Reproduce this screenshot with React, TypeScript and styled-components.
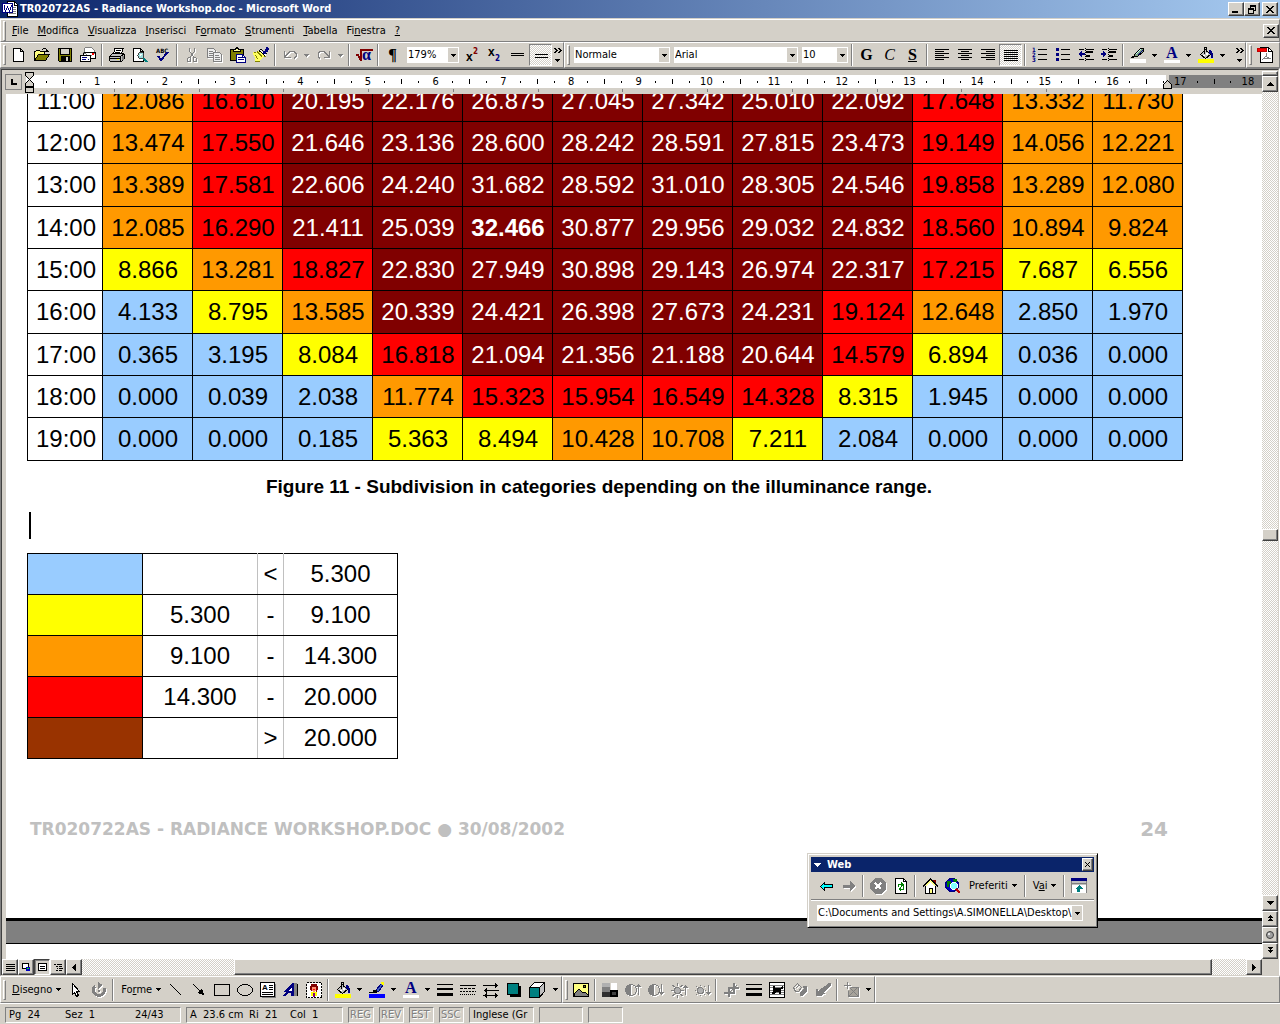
import React from 'react';
import styled, { createGlobalStyle, css } from 'styled-components';

const face = '#d4d0c8';
const shade = '#808080';
const dark = '#404040';
const navy = '#000080';
const ui = '"DejaVu Sans Condensed", "DejaVu Sans", Tahoma, sans-serif';
const doc = '"Liberation Sans", Arial, sans-serif';
const serif = '"Liberation Serif", "Times New Roman", serif';
const dither = 'repeating-conic-gradient(#fff 0 25%, #d4d0c8 0 50%) 0 0 / 2px 2px';

const Global = createGlobalStyle`
  *, *::before, *::after { box-sizing: border-box; }
  body { margin: 0; background: ${face}; font: 11px/14px ${ui}; color: #000; }
  button, input, select { font: inherit; color: inherit; margin: 0; padding: 0; border: 0; border-radius: 0; }
  table { border-collapse: collapse; }
  svg { display: block; flex: none; overflow: visible; }
`;

/* ---------- shared parts ---------- */

const Shell = styled.div`
  display: flex;
  flex-direction: column;
  height: 100vh;
  overflow: hidden;
  background: ${face};
`;

const raised = css`
  background: ${face};
  border: 1px solid;
  border-color: #fff ${dark} ${dark} #fff;
  box-shadow: inset -1px -1px 0 ${shade};
`;

const RaisedButton = styled.button<{ $w?: number; $h?: number; $on?: boolean }>`
  ${raised}
  display: flex;
  align-items: center;
  justify-content: center;
  flex: none;
  width: ${p => p.$w ?? 16}px;
  height: ${p => p.$h ?? 16}px;
  ${p => p.$on && css`border-color: ${dark} #fff #fff ${dark}; box-shadow: inset 1px 1px 0 ${shade};`}
`;

const Row = styled.div`
  display: flex;
  align-items: stretch;
  flex: none;
`;

const Bar = styled.div<{ $grow?: boolean; $h?: number }>`
  display: flex;
  align-items: center;
  flex: ${p => (p.$grow ? '1 0 auto' : 'none')};
  min-height: ${p => p.$h ?? 26}px;
  border: 1px solid;
  border-color: #fff ${shade} ${shade} #fff;
`;

const Grip = styled.span`
  flex: none;
  width: 3px;
  height: 20px;
  margin: 0 1px 0 2px;
  border: 1px solid;
  border-color: #fff ${shade} ${shade} #fff;
`;

const Sep = styled.span`
  flex: none;
  width: 2px;
  height: 22px;
  margin: 0 2px;
  border-left: 1px solid ${shade};
  border-right: 1px solid #fff;
`;

const ToolButton = styled.button<{ $on?: boolean; $off?: boolean }>`
  display: flex;
  align-items: center;
  justify-content: center;
  flex: none;
  width: 23px;
  height: 22px;
  background: transparent;
  border: 1px solid transparent;
  ${p => p.$on && css`background: ${dither}; border-color: ${shade} #fff #fff ${shade};`}
  ${p => p.$off && css`color: ${shade}; svg { filter: drop-shadow(1px 1px 0 #fff); }`}
`;

const CaretButton = styled(ToolButton)`
  width: 11px;
`;

const TextButton = styled.button`
  display: flex;
  align-items: center;
  gap: 4px;
  flex: none;
  height: 22px;
  padding: 0 3px 0 5px;
  background: transparent;
  white-space: nowrap;
`;

const Letter = styled.span<{ $italic?: boolean; $line?: boolean }>`
  font: ${p => (p.$italic ? 'italic 400' : 'normal 700')} 16px/18px ${serif};
  text-decoration: ${p => (p.$line ? 'underline' : 'none')};
`;

const Caret = () => (
  <svg width="5" height="3" viewBox="0 0 5 3" shapeRendering="crispEdges">
    <path d="M0 0h5v1h-1v1h-1v1h-1v-1h-1v-1h-1z" fill="currentColor" />
  </svg>
);

const U = styled.u`
  text-underline-offset: 1px;
`;

/* ---------- icons ---------- */

const Line = ({ d, c = '#000', f = 'none' }: { d: string; c?: string; f?: string }) => (
  <path d={d} stroke={c} fill={f} />
);
const Fill = ({ d, c = '#000' }: { d: string; c?: string }) => <path d={d} fill={c} />;
const T = ({ x, y, s, c = '#000', bold, f = ui, children }: { x: number; y: number; s: number; c?: string; bold?: boolean; f?: string; children: React.ReactNode }) => (
  <text x={x} y={y} fontSize={s} fill={c} fontWeight={bold ? 700 : 400} fontFamily={f}>{children}</text>
);

const bucket = (
  <>
    <Line d="M2.5 7.5l5-5 5 5-5 4z" f="#c0c0c0" />
    <Line d="M6.5 6.5v-6h2v4" />
    <Fill d="M8 6h2v2h-2zM5 8h2v1h-2z" c="#fff" />
    <Fill d="M11 3h2v1h1v2h1v5h-2v-4h-2z" c={navy} />
  </>
);
const disk = (dir: 'up' | 'down') => (
  <>
    <circle cx="6" cy="8" r="5.5" fill="none" stroke={shade} />
    <path d="M6 2.500a5.500 5.500 0 0 0 0 11z" fill={shade} />
    <Line d="M13.500 2v11" c={shade} />
    <Line d={dir === 'up' ? 'M11 4.500h5M12 3.500h3' : 'M11 10.500h5M12 11.500h3'} c={shade} />
  </>
);
const sun = (dir: 'up' | 'down') => (
  <>
    <circle cx="6.500" cy="8.500" r="3" fill="#b0b0b0" stroke={shade} />
    <Line d={dir === 'up' ? 'M6.500 1v3M6.500 13v3M0 8.500h3M10 8.500h3M1.500 3l2 2M11.500 3l-2 2M1.500 14l2-2M11.500 14l-2-2' : 'M6.500 3v1M6.500 13v1M1 8.500h1M11 8.500h1M2 4.500h1M10 4.500h1M2 12.500h1M10 12.500h1'} c={shade} />
    <Line d="M14.500 3v10" c={shade} />
    <Line d={dir === 'up' ? 'M12 5.500h5M13 4.500h3' : 'M12 10.500h5M13 11.500h3'} c={shade} />
  </>
);
const thick = <Fill d="M0 2h16v1h-16zM0 6h16v2h-16zM0 11h16v3h-16z" />;

const icons: Record<string, React.ReactNode> = {
  word: (
    <>
      <Line d="M5.5 .5h7l3 3v12h-10z" f="#fff" />
      <Line d="M12.500 1v3h3" />
      <Line d="M11 6.500h3M11 8.500h3M7 12.500h7M11 10.500h3" c={shade} />
      <Line d="M.5 2.500h10v9h-10z" c={navy} f="#fff" />
      <Line d="M2 4v2l1.500 4 2-4 2 4 1.500-4v-2" c={navy} />
    </>
  ),
  new: <Line d="M2.500 1.500h7l3 3v10h-10zM9.500 1.500v3h3" f="#fff" />,
  open: (
    <>
      <Line d="M.5 13.500v-9h1l1-1h3l1 1h4v3" f="#ffff80" />
      <Line d="M.5 13.500l4-6h11l-4 6z" f="#808000" />
      <Line d="M8 2.500h1M9 1.500h3M12.500 2v3M11 4.500h4M13.500 3v1" />
    </>
  ),
  save: (
    <>
      <Line d="M1.500 1.500h13v13h-12l-1-1z" f="#808000" />
      <Line d="M3.500 1.500h9v6h-9z" f={face} />
      <Fill d="M4 9h9v6h-9z" />
      <Fill d="M9 10h2v4h-2z" c={face} />
    </>
  ),
  mail: (
    <>
      <Line d="M4.500 5.500v-4l1-1h6l3 3v5" c={shade} f="#fff" />
      <Line d="M3.500 5.500h12v6h-12z" f="#fff" />
      <Line d="M3.500 5.500l6 4 6-4" c={shade} />
      <Fill d="M12 6h2v2h-2z" c="#f00" />
      <Line d="M.5 8.500h10v6h-10z" f="#fff" />
      <Line d="M2 10.500h5M2 12.500h4M8 12.500h1" c={navy} />
    </>
  ),
  print: (
    <>
      <Line d="M4.500 6.500l1.500-5h8l-1.500 5z" f="#fff" />
      <Line d="M7 3.500h5M6 5.500h5" />
      <Line d="M.5 9.500l3-3h11l1 1v4l-3 3h-11l-1-1z" f="#c0c0c0" />
      <Line d="M.5 9.500h11l4-3M11.500 9.500v5M1 11.500h10" />
      <Fill d="M8 12h2v1h-2z" c="#ff0" />
      <Fill d="M13 9h2v4h-2z" c={shade} />
    </>
  ),
  preview: (
    <>
      <Line d="M1.500 1.500h7l3 3v10h-10zM8.500 1.500v3h3" f="#fff" />
      <circle cx="9" cy="8.500" r="3" fill="#9fe0e0" stroke="#404040" />
      <Fill d="M8 7h2v1h-1v1h-1z" c="#fff" />
      <path d="M11.500 11l3.500 4" stroke="#008080" strokeWidth="2" />
    </>
  ),
  spell: (
    <>
      <T x={1} y={6} s={6} bold>ABC</T>
      <path d="M3 9l3 4 7-8" stroke={navy} strokeWidth="2" fill="none" />
    </>
  ),
  cut: (
    <>
      <Line d="M5.500 1v3l4 6M10.500 1v3l-4 6" c={shade} />
      <Line d="M4.500 10.500h2v4h-3v-3zM9.500 10.500h2l1 1v3h-3z" c={shade} />
    </>
  ),
  copy: (
    <>
      <Line d="M.5 1.500h6l2 2v7h-8z" c={shade} f="#eee" />
      <Line d="M2 4.500h4M2 6.500h5M2 8.500h5" c={shade} />
      <Line d="M6.500 5.500h6l2 2v7h-8z" c={shade} f="#eee" />
      <Line d="M8 8.500h4M8 10.500h5M8 12.500h5" c={shade} />
    </>
  ),
  paste: (
    <>
      <Line d="M.5 2.500h13v11h-13z" f="#808000" />
      <Line d="M3.500 3.500v-1h2l1-2h1l1 2h2v2h-7z" f="#ffffa0" />
      <Line d="M6.500 7.500h6l3 3v5h-9z" c={navy} f="#fff" />
      <Line d="M8 10.500h4M8 12.500h6M12.500 8v2h3" c={navy} />
    </>
  ),
  brush: (
    <>
      <Fill d="M0 5h4l1-1h3l3 4v2l-2 1-3 3h-4l-1-1h1v-3h-1v-2h-1z" c="#ffff60" />
      <Line d="M1 5.500h2M4 4.500l5 5M2.500 8l2 4" c="#808000" />
      <Line d="M6 3.500l7 6M7.500 2l6 5" />
      <Line d="M7 3l6 5.500" c="#fff" />
      <Fill d="M13 0h2v1h1v2h-1v2h-2v2h-3v-3h2v-2h1z" c={navy} />
      <Line d="M2 14.500h5M11 9.500h2" c="#808000" />
    </>
  ),
  undo: <Line d="M2.500 4v6h6M3 9.500l3-3M6 6.500l2-2h4l2 2v3l-2 2" c={shade} />,
  redo: <Line d="M13.500 4v6h-6M13 9.500l-3-3M10 6.500l-2-2h-4l-2 2v3l2 2" c={shade} />,
  root: (
    <>
      <path d="M0 8h2l3 6v-11h12" stroke="#800000" strokeWidth="1.500" fill="none" />
      <T x={6} y={13} s={16} c={navy} f={serif} bold>α</T>
    </>
  ),
  sup: (<><T x={2} y={14} s={12} bold f={doc}>x</T><T x={9} y={7} s={8} c="#800000" bold>2</T></>),
  sub: (<><T x={1} y={9} s={12} bold f={doc}>x</T><T x={8} y={14} s={8} c={navy} bold>2</T></>),
  equal: <Fill d="M1 6h13v1h-13zM1 8h13v1h-13z" />,
  equalWide: <Fill d="M2 7h13v1h-13zM2 10h13v1h-13z" />,
  left: <Fill d="M1 2h14v1h-14zM1 4h9v1h-9zM1 6h14v1h-14zM1 8h9v1h-9zM1 10h14v1h-14zM1 12h9v1h-9z" />,
  center: <Fill d="M1 2h14v1h-14zM4 4h8v1h-8zM1 6h14v1h-14zM4 8h8v1h-8zM1 10h14v1h-14zM4 12h8v1h-8z" />,
  right: <Fill d="M1 2h14v1h-14zM6 4h9v1h-9zM1 6h14v1h-14zM6 8h9v1h-9zM1 10h14v1h-14zM6 12h9v1h-9z" />,
  justify: <Fill d="M1 3h14v1h-14zM1 5h14v1h-14zM1 7h14v1h-14zM1 9h14v1h-14zM1 11h14v1h-14zM1 13h14v1h-14z" />,
  numbers: (
    <>
      <T x={0} y={5} s={6} c={navy} bold>1</T><T x={0} y={10} s={6} c={navy} bold>2</T><T x={0} y={15} s={6} c={navy} bold>3</T>
      <Fill d="M6 2h9v1h-9zM6 7h9v1h-9zM6 12h9v1h-9z" />
    </>
  ),
  bullets: (<><Fill d="M1 1h3v3h-3zM1 6h3v3h-3zM1 11h3v3h-3z" c={navy} /><Fill d="M6 2h9v1h-9zM6 7h9v1h-9zM6 12h9v1h-9z" /></>),
  outdent: (
    <>
      <Fill d="M1 2h5v1h-5zM8 2h8v1h-8zM8 4h7v2h-7zM8 8h4v2h-4zM1 12h5v1h-5zM8 12h8v1h-8z" />
      <path d="M7.500 1v14" stroke="#000" strokeDasharray="1 1" />
      <Fill d="M0 7h1v-1h1v-1h1v-1h1v2h3v2h-3v2h-1v-1h-1v-1h-1v-1h-1z" c={navy} />
    </>
  ),
  indent: (
    <>
      <Fill d="M1 2h5v1h-5zM8 2h8v1h-8zM8 4h7v2h-7zM8 8h4v2h-4zM1 12h5v1h-5zM8 12h8v1h-8z" />
      <path d="M7.500 1v14" stroke="#000" strokeDasharray="1 1" />
      <Fill d="M6 7h-1v-1h-1v-1h-1v-1h-1v2h-2v2h2v2h1v-1h1v-1h1v-1h1z" c={navy} />
    </>
  ),
  highlight: (
    <>
      <Fill d="M0 12h16v4h-16z" c="#fff" />
      <Line d="M4.500 7.500l6-6h3v3l-6 5h-3z" f="#80a080" />
      <Line d="M6 7l5-5" c="#c0ffff" />
      <Line d="M8 8l5-5" c={navy} />
      <Fill d="M2 9h3v1h-3zM1 10h3v1h-3z" />
    </>
  ),
  fontWhite: (<><Fill d="M0 13h16v3h-16z" c="#fff" /><T x={2} y={11} s={16} c={navy} bold f={serif}>A</T></>),
  bucketYellow: (<><Fill d="M0 12h16v4h-16z" c="#ff0" />{bucket}</>),
  penBlue: (
    <>
      <Fill d="M0 12h16v4h-16z" c="#00f" />
      <Line d="M6.500 8.500l6-7 2 1-5 7z" c={navy} f="#4060c0" />
      <Fill d="M12 0h3v3h-2z" c="#ff0" />
      <Line d="M0 10.500h4l3-2" />
      <Fill d="M4 8h4v3h-4z" />
    </>
  ),
  pdf: (
    <>
      <Line d="M3.500 .5h8l4 4v11h-12z" f="#fff" />
      <Line d="M11.500 .5v4h4" />
      <Line d="M5 13l4-4v-3l1 4 4 2M6 12l7-1" c={shade} />
      <Line d="M.5 1.500h9v3h-9z" c="#c00000" f="#f00" />
    </>
  ),
  cursor: <Line d="M4.500 1.500v11l2-2 2 4 2-1-2-4h3z" f="#fff" />,
  rotate: (
    <>
      <path d="M4 4a5.500 5.500 0 1 0 9 2" stroke={shade} strokeWidth="3" fill="none" />
      <Fill d="M7 0v7l5-4z" c={shade} />
      <circle cx="8" cy="9" r="1.500" fill={shade} />
    </>
  ),
  line: <Line d="M2 2l11 11" />,
  arrow: (<><Line d="M2 2l8 8" /><Fill d="M13 13l-7-2 5-5z" /></>),
  rect: <Line d="M.5 2.500h15v11h-15z" />,
  oval: <ellipse cx="8" cy="8" rx="7.500" ry="5.500" fill="none" stroke="#000" />,
  textbox: (
    <>
      <Fill d="M2 2h14v14h-14z" c={shade} />
      <Line d="M.5 .5h14v14h-14z" f="#fff" />
      <T x={2} y={8} s={8} bold f={doc}>A</T>
      <Fill d="M9 3h4v1h-4zM9 5h4v1h-4zM9 7h4v1h-4zM2 10h11v1h-11zM2 12h11v1h-11z" />
    </>
  ),
  wordart: (
    <>
      <Fill d="M11 1h3l1 13h-4z" c={shade} />
      <path d="M0 10l9-9h2v13h-3v-3h-3l-2 3h-3l3-4z" fill={navy} />
      <Line d="M6.500 8.500l2-2v2z" c="#fff" />
      <Line d="M14.500 2v12" />
    </>
  ),
  clip: (
    <>
      <rect x=".5" y=".5" width="15" height="15" fill="#fff" stroke="#000" strokeDasharray="2 1" />
      <Fill d="M5 2h6v2h1v4h-1v2h-1v-5h-3v4h-2v-1h-1v-4h1z" c="#800000" />
      <Fill d="M6 5h4v4h-1v1h-2v-1h-1z" c="#ff9070" />
      <Fill d="M7 7h2v1h-2z" c="#f00" />
      <Fill d="M5 10h6v4h-6z" c="#ff0" />
      <Fill d="M7 11h2v4h-2z" c="#800080" />
    </>
  ),
  thick,
  dashes: (
    <>
      <Fill d="M0 3h16v1h-16z" />
      <path d="M0 6.500h16" stroke="#000" strokeDasharray="3 1" />
      <path d="M0 9.500h16" stroke="#000" strokeDasharray="2 1" />
      <path d="M0 12.500h16" stroke="#000" strokeDasharray="1 1" />
    </>
  ),
  arrows: (
    <>
      <Line d="M0 3.500h15M1 8.500h15M0 13.500h15" />
      <Fill d="M12 1h1v1h1v1h1v1h-1v1h-1v1h-1zM4 6h-1v1h-1v1h-1v1h1v1h1v1h1zM12 11h1v1h1v1h1v1h-1v1h-1v1h-1z" />
      <Fill d="M4 11h-1v1h-1v1h-1v1h1v1h1v1h1z" />
    </>
  ),
  shadow: (<><Fill d="M4 4h11v11h-11z" /><Line d="M1.500 1.500h11v11h-11z" f="#008080" /></>),
  cube: (
    <>
      <Line d="M.5 5.500l5-5h10l-5 5z" f="#fff" />
      <Line d="M10.500 5.500l5-5v9l-5 6z" f="#c0c0c0" />
      <Line d="M.5 5.500h10v10h-10z" f="#008080" />
    </>
  ),
  picture: (
    <>
      <Line d="M.5 1.500h15v13h-15z" f="#ffff80" />
      <Line d="M10.500 3.500h2v2h-2z" f="#808000" />
      <Line d="M1 12l5-5 4 4 2-1 3 3v1h-14z" f={shade} />
    </>
  ),
  tone: (
    <>
      <Fill d="M0 1h8v4h-8z" c="#b0b0b0" /><Fill d="M0 5h8v5h-8z" c={shade} /><Fill d="M0 10h8v5h-8z" c="#303030" />
      <Fill d="M9 1h6v7h-6z" c="#fff" /><Fill d="M8 8h8v7h-8z" /><Fill d="M10 10h4v3h-4z" c="#404040" />
    </>
  ),
  moreContrast: disk('up'),
  lessContrast: disk('down'),
  moreLight: sun('up'),
  lessLight: sun('down'),
  crop: (
    <>
      <Fill d="M10 1h2v10h-2zM5 5h2v10h-2zM5 5h11v2h-11zM1 10h11v2h-11z" c={shade} />
      <Line d="M7 10l7-7" c={shade} />
    </>
  ),
  wrap: (
    <>
      <Line d="M.5 .5h15v15h-15z" f="#fff" />
      <Line d="M1 3.500h14M1 5.500h14M1 10.500h14M1 12.500h14M1 8.500h14" c={shade} />
      <Fill d="M4 4h2v2h5l2-2h1v3h-2v5h-2v-2h-3l-2 2h-2v-2h1z" />
    </>
  ),
  format: (
    <>
      <Line d="M1.500 5.500l4-4 4 4-3 4h-3zM4 6l3-3" c={shade} />
      <Fill d="M8 10l4-4h3v3l-4 5h-3zM11 4h4v2h-4z" c={shade} />
    </>
  ),
  transparent: <Fill d="M14 1h2v2l-8 8h2v1h-2l-2 2h-5v-7h2v2z" c={shade} />,
  reset: (
    <>
      <Fill d="M0 3h7v1h-7zM3 0h1v7h-1z" c={shade} />
      <Fill d="M6 5h9v9h-11v-6h2z" c="#a8a49c" />
      <Line d="M6.500 5.500h8v9h-10v-6M5 14l9-9M6 6l8 8" c={shade} />
    </>
  ),
  back: <Line d="M2.500 8.500l4-4v2h8v3h-8v3z" f="#0ff" />,
  forward: <Fill d="M14 8l-5-5v4h-7v3h7v4z" c={shade} />,
  stop: (<><path d="M5 0h6l5 5v6l-5 5h-6l-5-5v-6z" fill={shade} /><path d="M5 5l6 6M11 5l-6 6" stroke="#fff" strokeWidth="2" /></>),
  refresh: (
    <>
      <Line d="M2.500 .5h8l3 3v12h-11z" f="#fff" /><Line d="M10.500 .5v3h3" />
      <path d="M5.500 9v-3h3M10.500 7v4h-3" stroke="#008000" fill="none" />
      <Fill d="M8 4l3 2-3 3zM8 8l-3 3 3 2z" c="#008000" />
    </>
  ),
  home: (
    <>
      <Fill d="M11 2h3v5h-3z" c="#800000" />
      <Line d="M3.500 15.500v-7l5-5 5 5v7z" f="#fff" />
      <Line d="M1 8.500l7.500-7.500 7.500 7.500" />
      <Line d="M4 7.500l4.500-4.500 4.500 4.500" c="#ffff80" />
      <Line d="M7.500 15v-5h3v5" f="#ffff80" />
    </>
  ),
  search: (
    <>
      <circle cx="7" cy="7" r="6.500" fill="#0000c0" stroke={navy} />
      <Fill d="M2 3h4v3h-2v3h-2zM8 1h4v3h-3z" c="#008000" />
      <circle cx="9" cy="8" r="3.500" fill="#80ffff" stroke="#fff" />
      <path d="M11 11l4 4" stroke="#c00000" strokeWidth="2" />
    </>
  ),
  webbars: (
    <>
      <Fill d="M0 0h16v3h-16z" c={navy} /><Fill d="M0 3h16v4h-16z" c="#c0c0c0" /><Fill d="M0 5h16v1h-16z" c={shade} />
      <Fill d="M0 7h15v8h-15z" c="#fff" /><Line d="M.5 3v12M15.500 3v12" c={shade} />
      <Fill d="M8 7l4 4h-3v3h-3v-3h-2z" c="#008080" />
    </>
  ),
};

const Icon = ({ n, size = 16 }: { n: string; size?: number }) => (
  <svg width={size} height={size} viewBox="0 0 16 16" shapeRendering="crispEdges" aria-hidden>
    {icons[n]}
  </svg>
);

const Glyph = ({ d, w = 8, h = 8, c = '#000' }: { d: string; w?: number; h?: number; c?: string }) => (
  <svg width={w} height={h} viewBox={`0 0 ${w} ${h}`} shapeRendering="crispEdges" aria-hidden>
    <path d={d} fill={c} />
  </svg>
);

const closeD = 'M0 0h2v1h1v1h2v-1h1v-1h2v1h-1v1h-1v1h-1v1h1v1h1v1h1v1h-2v-1h-1v-1h-2v1h-1v1h-2v-1h1v-1h1v-1h1v-1h-1v-1h-1v-1h-1z';

const Tool = ({ n, on, off }: { n: string; on?: boolean; off?: boolean }) => (
  <ToolButton $on={on} $off={off} aria-label={n} disabled={off}><Icon n={n} /></ToolButton>
);
const Drop = ({ off }: { off?: boolean }) => (
  <CaretButton $off={off} aria-label="menu" disabled={off}><Caret /></CaretButton>
);
const Tools = ({ list, off }: { list: string[]; off?: boolean }) => <>{list.map(n => <Tool key={n} n={n} off={off} />)}</>;

/* ---------- title and menus ---------- */

const TitleBar = styled.header`
  display: flex;
  align-items: center;
  flex: none;
  height: 18px;
  margin-bottom: 1px;
  padding: 0 2px;
  background: linear-gradient(to right, #0a246a, #a6caf0);
  color: #fff;
`;

const Title = styled.h1`
  flex: 1;
  margin: 0 0 0 2px;
  font: bold 11px/18px ${ui};
  white-space: nowrap;
`;

const Gap = styled.span`
  flex: none;
  width: 2px;
`;

const Menus = styled.nav`
  display: flex;
  flex: 1;
`;

const MenuItem = styled.button`
  height: 21px;
  padding: 0 4px 0 5px;
  background: transparent;
`;

const menus = [['', 'F', 'ile'], ['', 'M', 'odifica'], ['', 'V', 'isualizza'], ['', 'I', 'nserisci'], ['F', 'o', 'rmato'], ['', 'S', 'trumenti'], ['', 'T', 'abella'], ['Fi', 'n', 'estra'], ['', '?', '']];

/* ---------- combo boxes ---------- */

const Combo = styled.label<{ $w: number }>`
  position: relative;
  flex: none;
  width: ${p => p.$w}px;
  height: 16px;
  background: #fff;
`;

const Select = styled.select`
  appearance: none;
  display: block;
  width: 100%;
  height: 16px;
  padding-left: 1px;
  background: transparent;
  outline: 0;
`;

const ComboArrow = styled.span`
  position: absolute;
  top: 1px;
  right: 1px;
  bottom: 1px;
  width: 10px;
  display: flex;
  align-items: center;
  justify-content: center;
  background: ${face};
  pointer-events: none;
`;

const ComboBox = ({ w, value, name }: { w: number; value: string; name: string }) => (
  <Combo $w={w}>
    <Select aria-label={name} defaultValue={value}><option>{value}</option></Select>
    <ComboArrow><Caret /></ComboArrow>
  </Combo>
);

const Combos = styled.div`
  display: flex;
  gap: 4px;
  margin: 0 1px 0 3px;
`;

const More = styled.button`
  display: flex;
  flex-direction: column;
  align-items: center;
  gap: 6px;
  flex: none;
  width: 11px;
  background: transparent;
`;

const Chevron = () => (
  <More aria-label="more">
    <Glyph w={8} h={5} d="M0 0h2v1h1v1h1v1h-1v1h-1v1h-2v-1h1v-1h1v-1h-1v-1h-1zM4 0h2v1h1v1h1v1h-1v1h-1v1h-2v-1h1v-1h1v-1h-1v-1h-1z" />
    <Caret />
  </More>
);

/* ---------- document frame ---------- */

const Frame = styled.div`
  display: flex;
  flex-direction: column;
  flex: 1;
  min-height: 0;
  border: 1px solid;
  border-color: ${shade} #fff ${face} ${shade};
`;

const FrameInner = styled.div`
  display: flex;
  flex-direction: column;
  flex: 1;
  min-height: 0;
  border-top: 1px solid ${dark};
  border-left: 1px solid ${dark};
  border-right: 1px solid ${face};
`;

const FrameBody = styled.div`
  display: flex;
  flex: 1;
  min-height: 0;
`;

const Column = styled.div`
  display: flex;
  flex-direction: column;
  flex: 1;
  min-width: 0;
`;

const Ruler = styled.div`
  display: flex;
  flex: none;
  height: 24px;
  padding: 4px 0 0 3px;
`;

const TabKind = styled.button`
  display: flex;
  align-items: center;
  justify-content: center;
  width: 17px;
  height: 16px;
  background: ${face};
  border: 1px solid;
  border-color: #fff ${shade} ${shade} #fff;
  outline: 1px solid ${shade};
  outline-offset: -1px;
`;

const Scale = styled.div`
  position: relative;
  flex: 1;
  margin: 1px 0 0 4px;
`;

const Band = styled.div`
  display: flex;
  height: 13px;
  padding: 0 6px 0 12px;
  background: linear-gradient(to right, #fff 1140px, ${face} 1140px 1143px, ${shade} 1143px);
`;

const Tick = styled.span`
  display: flex;
  align-items: center;
  justify-content: center;
  flex: 1 1 0;
  min-width: 0;
`;

const Mark = styled.i<{ $tall: boolean }>`
  width: 1px;
  height: ${p => (p.$tall ? 5 : 2)}px;
  background: #000;
`;

const Stops = styled.div`
  display: grid;
  grid-template-columns: repeat(13, 1fr);
  margin: 1px 130px 0 4px;
`;

const Stop = styled.i`
  height: 3px;
  border-right: 1px solid ${shade};
`;

const Indent = styled.span<{ $x: number; $y: number }>`
  position: absolute;
  left: ${p => p.$x}px;
  top: ${p => p.$y}px;
`;

const Viewport = styled.main`
  position: relative;
  display: flex;
  flex-direction: column;
  flex: 1;
  min-height: 0;
  margin-left: 4px;
  background: ${shade};
  overflow: hidden;
`;

const Page = styled.article`
  flex: none;
  margin-top: -15px;
  padding: 0 94px 79px 21px;
  background: #fff;
  border-bottom: 3px solid #000;
`;

const NextPage = styled.div`
  flex: 1;
  margin-top: 22px;
  background: #fff;
  border-top: 1px solid #000;
`;

const tones: Record<string, [string, string]> = {
  w: ['#fff', '#000'],
  b: ['#99ccff', '#000'],
  y: ['#ffff00', '#000'],
  o: ['#ff9900', '#000'],
  r: ['#ff0000', '#000'],
  d: ['#800000', '#fff'],
  m: ['#993300', '#000'],
};

const DataTable = styled.table`
  table-layout: fixed;
  width: 1156px;
  font: 24px/28px ${doc};
  text-align: center;
`;

const DataRow = styled.tr`
  height: 42px;
  &:nth-child(3n) { height: 43px; }
`;

const Hour = styled.th`
  width: 75px;
  padding: 0 0 0 2px;
  font-weight: 400;
  border: 1px solid #000;
`;

const Cell = styled.td<{ $tone: string; $bold?: boolean }>`
  padding: 0 0 0 1px;
  border: 1px solid #000;
  background: ${p => tones[p.$tone][0]};
  color: ${p => tones[p.$tone][1]};
  font-weight: ${p => (p.$bold ? 700 : 400)};
`;

const Caption = styled.p`
  margin: 14px 0 0 3px;
  font: bold 19px/24px ${doc};
  text-align: center;
`;

const Insertion = styled.div`
  width: 2px;
  height: 27px;
  margin: 13px 0 14px 2px;
  background: #000;
`;

const Legend = styled.table`
  table-layout: fixed;
  width: 371px;
  font: 24px/28px ${doc};
  text-align: center;
`;

const LegendRow = styled.tr`
  height: 41px;
`;

const LegendCell = styled.td<{ $tone?: string; $soft?: 'left' | 'both' | 'right' }>`
  padding: 0;
  border: 1px solid #000;
  background: ${p => tones[p.$tone ?? 'w'][0]};
  ${p => p.$soft === 'left' && css`border-right-color: #c0c0c0;`}
  ${p => p.$soft === 'both' && css`border-left-color: #c0c0c0; border-right-color: #c0c0c0;`}
  ${p => p.$soft === 'right' && css`border-left-color: #c0c0c0;`}
`;

const Footer = styled.footer`
  display: flex;
  justify-content: space-between;
  margin: 60px 0 0 3px;
  font: bold 17px/20px "DejaVu Sans", Verdana, sans-serif;
  text-transform: uppercase;
  color: #c0c0c0;
`;

const PageNumber = styled.b`
  font-size: 20px;
`;

const hours: [string, string][] = [
  ['11:00', 'o12.086 r16.610 d20.195 d22.176 d26.875 d27.045 d27.342 d25.010 d22.092 r17.648 o13.332 o11.730'],
  ['12:00', 'o13.474 r17.550 d21.646 d23.136 d28.600 d28.242 d28.591 d27.815 d23.473 r19.149 o14.056 o12.221'],
  ['13:00', 'o13.389 r17.581 d22.606 d24.240 d31.682 d28.592 d31.010 d28.305 d24.546 r19.858 o13.289 o12.080'],
  ['14:00', 'o12.085 r16.290 d21.411 d25.039 d32.466 d30.877 d29.956 d29.032 d24.832 r18.560 o10.894 o9.824'],
  ['15:00', 'y8.866 o13.281 r18.827 d22.830 d27.949 d30.898 d29.143 d26.974 d22.317 r17.215 y7.687 y6.556'],
  ['16:00', 'b4.133 y8.795 o13.585 d20.339 d24.421 d26.398 d27.673 d24.231 r19.124 o12.648 b2.850 b1.970'],
  ['17:00', 'b0.365 b3.195 y8.084 r16.818 d21.094 d21.356 d21.188 d20.644 r14.579 y6.894 b0.036 b0.000'],
  ['18:00', 'b0.000 b0.039 b2.038 o11.774 r15.323 r15.954 r16.549 r14.328 y8.315 b1.945 b0.000 b0.000'],
  ['19:00', 'b0.000 b0.000 b0.185 y5.363 y8.494 o10.428 o10.708 y7.211 b2.084 b0.000 b0.000 b0.000'],
];

const legend = [['b', '', '<', '5.300'], ['y', '5.300', '-', '9.100'], ['o', '9.100', '-', '14.300'], ['r', '14.300', '-', '20.000'], ['m', '', '>', '20.000']];

/* ---------- scroll bars ---------- */

const VScroll = styled.div`
  display: flex;
  flex-direction: column;
  flex: none;
  width: 16px;
`;

const SplitBox = styled.div`
  ${raised}
  flex: none;
  height: 5px;
  margin-top: 1px;
`;

const Track = styled.div<{ $part: number }>`
  flex: ${p => p.$part} 1 0;
  background: ${dither};
`;

const Thumb = styled.div<{ $part: number }>`
  ${raised}
  flex: ${p => p.$part} 1 0;
`;

const upD = 'M3 0h1v1h1v1h1v1h1v1h-7v-1h1v-1h1v-1h1z';
const downD = 'M0 0h7v1h-1v1h-1v1h-1v1h-1v-1h-1v-1h-1v-1h-1z';
const leftD = 'M3 0h1v7h-1v-1h-1v-1h-1v-1h-1v-1h1v-1h1v-1h1z';
const rightD = 'M0 0h1v1h1v1h1v1h1v1h-1v1h-1v1h-1v1h-1z';

/* ---------- floating Web bar ---------- */

const Floating = styled.section`
  position: absolute;
  right: 164px;
  bottom: 31px;
  width: 291px;
  padding: 3px;
  background: ${face};
  border: 1px solid;
  border-color: ${face} #000 #000 ${face};
  box-shadow: inset 1px 1px 0 #fff, inset -1px -1px 0 ${shade};
`;

const FloatTitle = styled.div`
  display: flex;
  align-items: center;
  gap: 6px;
  height: 15px;
  padding: 0 1px 0 3px;
  background: #0a246a;
  color: #fff;
  font-weight: 700;
`;

const FloatName = styled.span`
  flex: 1;
`;

const FloatTools = styled.div`
  display: flex;
  align-items: center;
  height: 28px;
  padding-left: 3px;
  border-bottom: 1px solid ${shade};
  box-shadow: 0 1px 0 #fff;
`;

const Address = styled.div`
  display: flex;
  height: 16px;
  margin: 5px 11px 3px 6px;
  background: #fff;
  border: 1px solid #fff;
`;

const AddressInput = styled.input`
  flex: 1;
  min-width: 0;
  background: #fff;
  outline: 0;
`;

const AddressDrop = styled.button`
  display: flex;
  align-items: center;
  justify-content: center;
  width: 10px;
  background: ${face};
`;

/* ---------- status bar ---------- */

const Status = styled.footer`
  display: flex;
  align-items: center;
  flex: none;
  gap: 5px;
  height: 21px;
  padding: 1px 5px 0;
  border-top: 1px solid #fff;
`;

const Pane = styled.div<{ $w: number; $off?: boolean }>`
  display: flex;
  flex: none;
  width: ${p => p.$w}px;
  height: 16px;
  padding-left: 3px;
  border: 1px solid;
  border-color: ${shade} #fff #fff ${shade};
  white-space: pre;
  ${p => p.$off && css`color: ${shade}; text-shadow: 1px 1px 0 #fff; padding-left: 1px;`}
`;

const Field = styled.span<{ $w: number }>`
  flex: none;
  width: ${p => p.$w}px;
`;

export default function App() {
  return (
    <Shell>
      <Global />
      <TitleBar>
        <Icon n="word" />
        <Title>TR020722AS - Radiance Workshop.doc - Microsoft Word</Title>
        <RaisedButton $h={14} aria-label="Minimize"><Glyph w={8} h={8} d="M0 6h6v2h-6z" /></RaisedButton>
        <RaisedButton $h={14} aria-label="Restore"><Glyph w={8} h={9} d="M2 0h6v6h-2v-1h1v-3h-4v1h-1zM0 3h6v6h-6zM1 5v3h4v-3z" /></RaisedButton>
        <Gap />
        <RaisedButton $h={14} aria-label="Close"><Glyph w={8} h={7} d={closeD} /></RaisedButton>
      </TitleBar>

      <Row>
        <Bar $grow $h={23}>
          <Grip />
          <Menus>
            {menus.map(m => <MenuItem key={m.join('')}>{m[0]}<U>{m[1]}</U>{m[2]}</MenuItem>)}
          </Menus>
          <RaisedButton $h={14} aria-label="Close document"><Glyph w={8} h={7} d={closeD} /></RaisedButton>
        </Bar>
      </Row>

      <Row>
        <Bar>
          <Grip />
          <Tools list={['new', 'open', 'save', 'mail']} />
          <Sep />
          <Tools list={['print', 'preview', 'spell']} />
          <Sep />
          <Tools list={['cut', 'copy']} off />
          <Tools list={['paste', 'brush']} />
          <Sep />
          <Tool n="undo" off /><Drop off />
          <Tool n="redo" off /><Drop off />
          <Sep />
          <Tool n="root" />
          <Sep />
          <ToolButton aria-label="Show marks"><Letter>¶</Letter></ToolButton>
          <Combos><ComboBox w={52} value="179%" name="Zoom" /></Combos>
          <Tools list={['sup', 'sub', 'equal']} />
          <Tool n="equalWide" on />
          <Chevron />
        </Bar>
        <Bar>
          <Grip />
          <Combos>
            <ComboBox w={96} value="Normale" name="Style" />
            <ComboBox w={124} value="Arial" name="Font" />
            <ComboBox w={46} value="10" name="Size" />
          </Combos>
          <Sep />
          <ToolButton><Letter>G</Letter></ToolButton>
          <ToolButton><Letter $italic>C</Letter></ToolButton>
          <ToolButton><Letter $line>S</Letter></ToolButton>
          <Sep />
          <Tools list={['left', 'center', 'right']} />
          <Tool n="justify" on />
          <Sep />
          <Tools list={['numbers', 'bullets', 'outdent', 'indent']} />
          <Sep />
          <Tool n="highlight" /><Drop />
          <Tool n="fontWhite" /><Drop />
          <Tool n="bucketYellow" /><Drop />
          <Gap /><Gap /><Gap />
          <Chevron />
        </Bar>
        <Bar $grow>
          <Grip />
          <Tool n="pdf" />
        </Bar>
      </Row>

      <Frame>
        <FrameInner>
          <FrameBody>
            <Column>
              <Ruler>
                <TabKind aria-label="Tab"><Glyph w={6} h={6} d="M0 0h2v4h4v2h-6z" /></TabKind>
                <Scale>
                  <Band>
                    {Array.from({ length: 72 }, (_, i) => i + 1).map(k => (
                      <Tick key={k}>{k % 4 === 0 ? k / 4 : <Mark $tall={k % 4 === 2} />}</Tick>
                    ))}
                  </Band>
                  <Stops>{Array.from({ length: 13 }, (_, i) => <Stop key={i} />)}</Stops>
                  <Indent $x={-1} $y={-3}>
                    <svg width="9" height="22" viewBox="0 0 9 22" shapeRendering="crispEdges">
                      <path d="M.5 .5h8v3l-4 4-4-4zM.5 14.500v-3l4-4 4 4v3zM.5 15.500h8v5h-8z" fill={face} stroke="#000" />
                    </svg>
                  </Indent>
                  <Indent $x={1137} $y={5}>
                    <svg width="9" height="9" viewBox="0 0 9 9" shapeRendering="crispEdges">
                      <path d="M.5 8.500v-4l4-4 4 4v4z" fill={face} stroke="#000" />
                    </svg>
                  </Indent>
                </Scale>
              </Ruler>
              <Viewport>
                <Page>
                  <DataTable>
                    <tbody>
                      {hours.map(([hour, cells]) => (
                        <DataRow key={hour}>
                          <Hour scope="row">{hour}</Hour>
                          {cells.split(' ').map((c, i) => (
                            <Cell key={i} $tone={c[0]} $bold={c === 'd32.466'}>{c.slice(1)}</Cell>
                          ))}
                        </DataRow>
                      ))}
                    </tbody>
                  </DataTable>
                  <Caption>Figure 11 - Subdivision in categories depending on the illuminance range.</Caption>
                  <Insertion />
                  <Legend>
                    <colgroup><col width="115" /><col width="115" /><col width="26" /><col width="114" /></colgroup>
                    <tbody>
                      {legend.map(([tone, from, sign, to]) => (
                        <LegendRow key={tone}>
                          <LegendCell $tone={tone} />
                          <LegendCell $soft="left">{from}</LegendCell>
                          <LegendCell $soft="both">{sign}</LegendCell>
                          <LegendCell $soft="right">{to}</LegendCell>
                        </LegendRow>
                      ))}
                    </tbody>
                  </Legend>
                  <Footer>
                    <span>TR020722AS - Radiance Workshop.doc ● 30/08/2002</span>
                    <PageNumber>24</PageNumber>
                  </Footer>
                </Page>
                <NextPage />
                <Floating aria-label="Web">
                  <FloatTitle>
                    <Glyph w={7} h={4} d={downD} c="#fff" />
                    <FloatName>Web</FloatName>
                    <RaisedButton $w={11} $h={13} aria-label="Close Web bar"><Glyph w={5} h={5} d="M0 0h1v1h1v1h1v-1h1v-1h1v1h-1v1h-1v1h1v1h1v1h-1v-1h-1v-1h-1v1h-1v1h-1v-1h1v-1h1v-1h-1v-1h-1z" /></RaisedButton>
                  </FloatTitle>
                  <FloatTools>
                    <Tool n="back" />
                    <Tool n="forward" off />
                    <Sep />
                    <Tool n="stop" off />
                    <Tool n="refresh" />
                    <Sep />
                    <Tools list={['home', 'search']} />
                    <TextButton>Preferiti<Caret /></TextButton>
                    <Gap />
                    <Sep />
                    <TextButton><span>V<U>a</U>i</span><Caret /></TextButton>
                    <Gap />
                    <Sep />
                    <Tool n="webbars" />
                  </FloatTools>
                  <Address>
                    <AddressInput aria-label="Address" defaultValue="C:\Documents and Settings\A.SIMONELLA\Desktop\" />
                    <AddressDrop aria-label="Recent addresses"><Caret /></AddressDrop>
                  </Address>
                </Floating>
              </Viewport>
            </Column>
            <VScroll>
              <SplitBox />
              <RaisedButton aria-label="Scroll up"><Glyph w={7} h={4} d={upD} /></RaisedButton>
              <Track $part={438} />
              <Thumb $part={10} />
              <Track $part={355} />
              <RaisedButton aria-label="Scroll down"><Glyph w={7} h={4} d={downD} /></RaisedButton>
              <RaisedButton aria-label="Previous page"><Glyph w={5} h={7} d="M2 0h1v1h1v1h1v1h-2v1h1v1h1v1h-5v-1h1v-1h1v-1h-2v-1h1v-1h1z" /></RaisedButton>
              <RaisedButton aria-label="Browse by">
                <svg width="8" height="8" viewBox="0 0 8 8"><circle cx="4" cy="4" r="3.500" fill="#a0a0a0" stroke={dark} /><circle cx="3" cy="3" r="1" fill="#fff" /></svg>
              </RaisedButton>
              <RaisedButton aria-label="Next page"><Glyph w={5} h={7} d="M0 0h5v1h-1v1h-1v1h2v1h-1v1h-1v1h-1v-1h-1v-1h-1v-1h2v-1h-1v-1h-1z" /></RaisedButton>
            </VScroll>
          </FrameBody>
          <Row>
            <RaisedButton aria-label="Normal view"><Glyph w={9} h={7} d="M0 0h9v1h-9zM0 2h9v1h-9zM0 4h9v1h-9zM0 6h9v1h-9z" /></RaisedButton>
            <RaisedButton aria-label="Web view">
              <svg width="9" height="8" viewBox="0 0 9 8" shapeRendering="crispEdges"><path d="M.5 .5h6v5h-6z" fill="#fff" stroke="#000" /><path d="M4 4h4v4h-4z" fill="#0000c0" /><path d="M5 5h2v1h-2z" fill="#0f0" /></svg>
            </RaisedButton>
            <RaisedButton $on aria-label="Print view">
              <svg width="9" height="8" viewBox="0 0 9 8" shapeRendering="crispEdges"><path d="M.5 .5h8v7h-8z" fill="#fff" stroke="#000" /><path d="M2 3h5v1h-5zM2 5h5v1h-5z" /></svg>
            </RaisedButton>
            <RaisedButton aria-label="Outline view"><Glyph w={9} h={7} d="M0 0h2v1h-2zM3 0h5v1h-5zM2 2h2v1h-2zM5 2h3v1h-3zM3 4h1v1h-1zM5 4h4v1h-4zM2 6h2v1h-2zM5 6h3v1h-3z" /></RaisedButton>
            <RaisedButton aria-label="Scroll left"><Glyph w={4} h={7} d={leftD} /></RaisedButton>
            <Track $part={152} />
            <Thumb $part={977} />
            <Track $part={34} />
            <RaisedButton aria-label="Scroll right"><Glyph w={4} h={7} d={rightD} /></RaisedButton>
            <Field $w={16} />
          </Row>
        </FrameInner>
      </Frame>

      <Row>
        <Bar $h={27}>
          <Grip />
          <TextButton><span><U>D</U>isegno</span><Caret /></TextButton>
          <Tool n="cursor" />
          <Tool n="rotate" off />
          <Sep />
          <TextButton><span>Fo<U>r</U>me</span><Caret /></TextButton>
          <Tools list={['line', 'arrow', 'rect', 'oval', 'textbox', 'wordart', 'clip']} />
          <Sep />
          <Tool n="bucketYellow" /><Drop />
          <Tool n="penBlue" /><Drop />
          <Tool n="fontWhite" /><Drop />
          <Tools list={['thick', 'dashes', 'arrows', 'shadow', 'cube']} />
          <Gap />
          <Drop />
        </Bar>
        <Bar $h={27}>
          <Grip />
          <Tool n="picture" />
          <Sep />
          <Tool n="tone" />
          <Tools list={['moreContrast', 'lessContrast', 'moreLight', 'lessLight']} off />
          <Sep />
          <Tool n="crop" off />
          <Tools list={['thick', 'wrap']} />
          <Tools list={['format', 'transparent']} off />
          <Sep />
          <Tool n="reset" off />
          <Drop />
        </Bar>
        <Bar $grow $h={27} />
      </Row>

      <Status>
        <Pane $w={176}><Field $w={56}>Pg  24</Field><Field $w={70}>Sez  1</Field>24/43</Pane>
        <Pane $w={157}><Field $w={59}>A  23.6 cm</Field><Field $w={41}>Ri  21</Field>Col  1</Pane>
        <Pane $w={26} $off>REG</Pane>
        <Pane $w={25} $off>REV</Pane>
        <Pane $w={25} $off>EST</Pane>
        <Pane $w={25} $off>SSC</Pane>
        <Pane $w={65}>Inglese (Gr</Pane>
        <Pane $w={44} />
        <Pane $w={35} />
      </Status>
    </Shell>
  );
}
